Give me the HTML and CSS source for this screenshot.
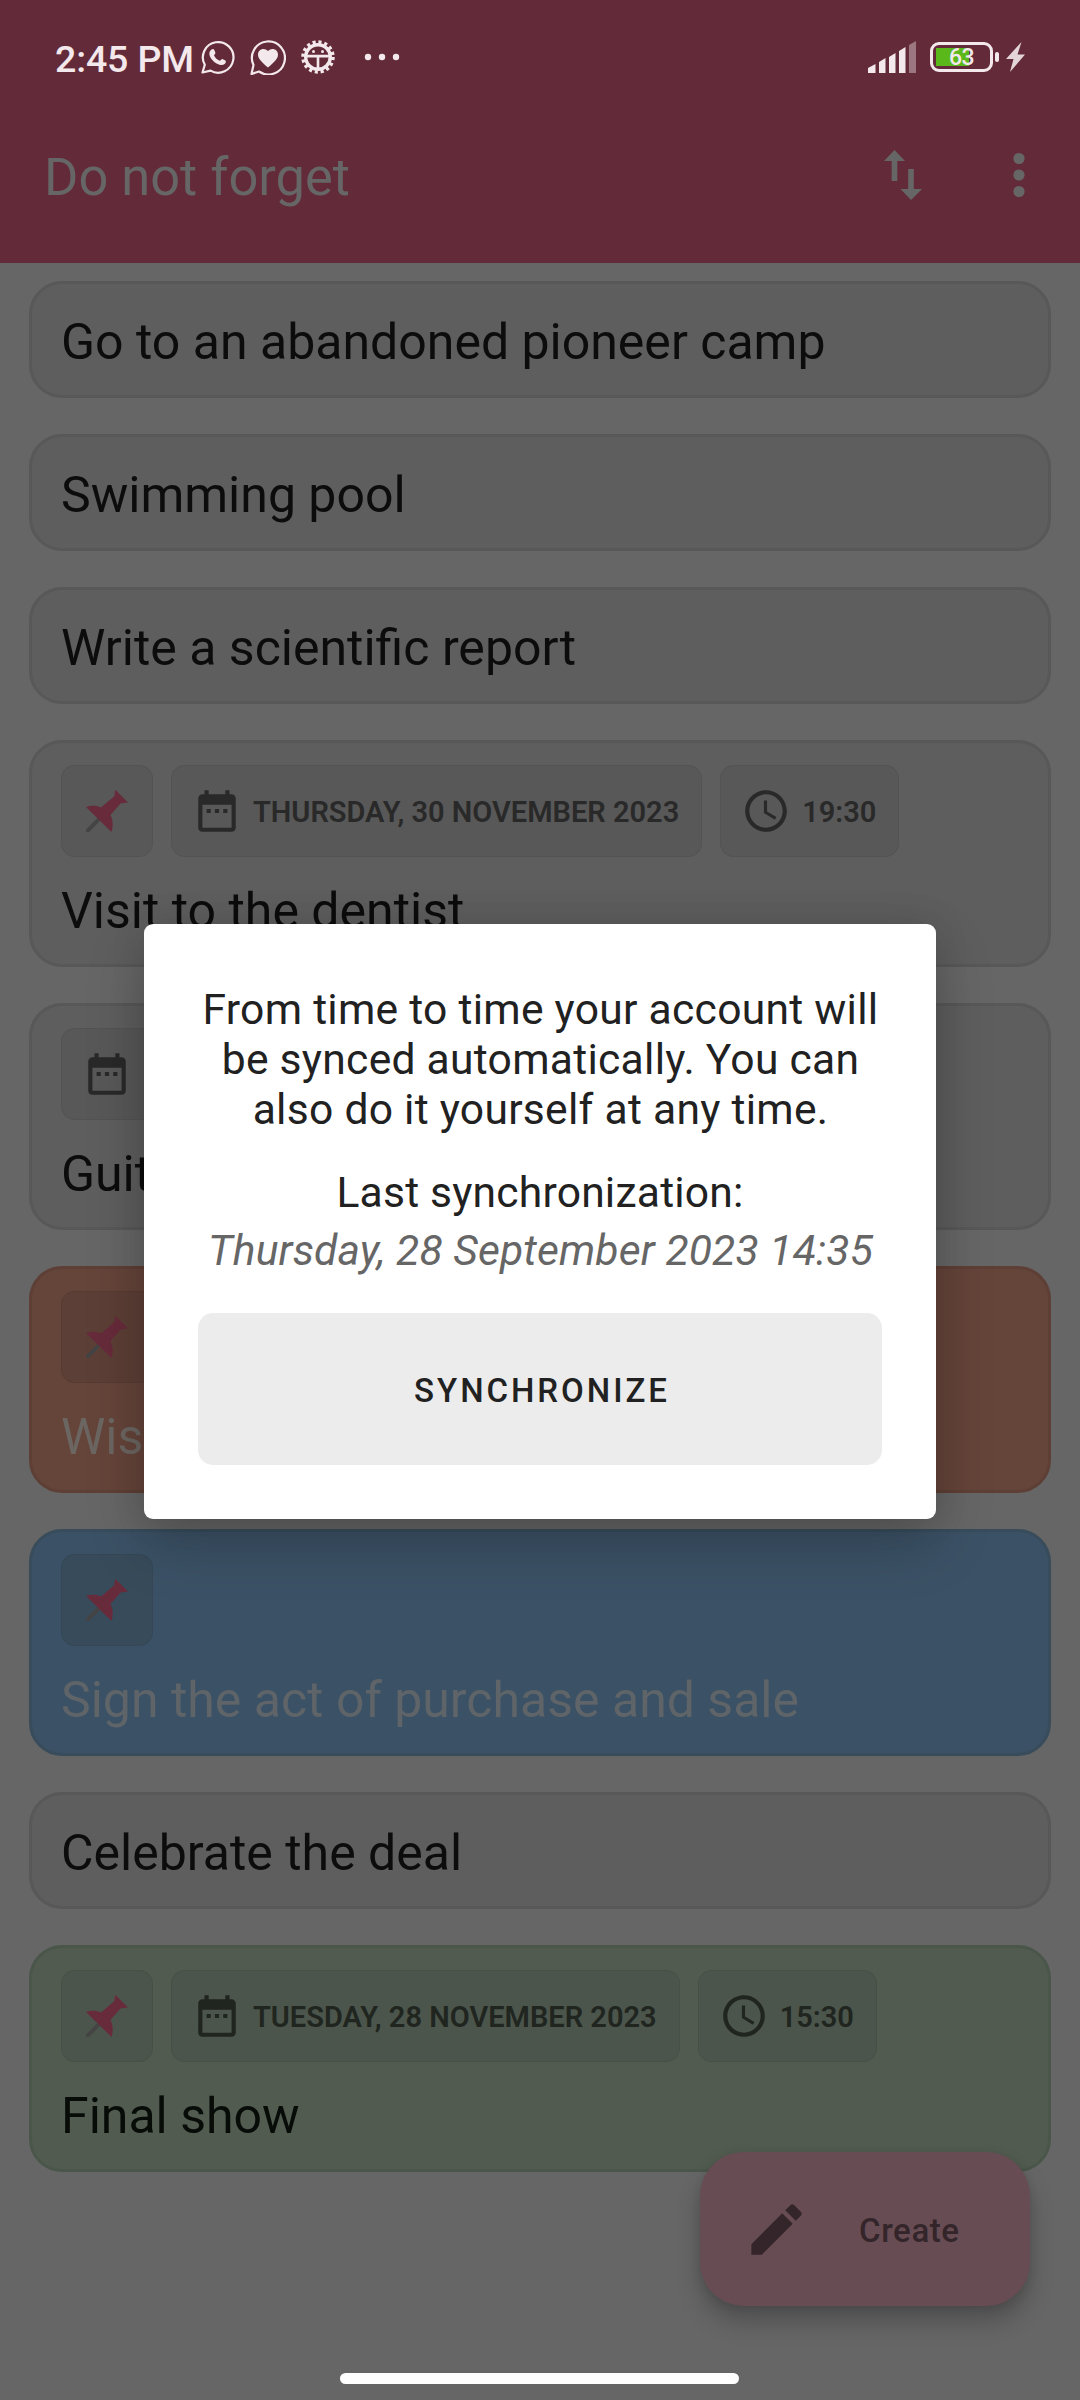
FILE: index.html
```html
<!DOCTYPE html>
<html lang="en">
<head>
<meta charset="utf-8">
<title>Do not forget</title>
<link rel="stylesheet" href="styles.css">
</head>
<body>
<svg class="defs" aria-hidden="true">
  <symbol id="pin" viewBox="0 0 42 42">
    <path class="pin-needle" d="M13 26.500 0 39.500V42H3L16 29z"/>
    <path class="pin-head" d="M29.500 0 42 12.500C39 13 37 13 34.500 13.500L24.500 25C27 30 27.500 36 25.500 42L0 17C5 15 11 15.500 15 17.500L28.500 6C28.500 4 28.500 2 29.500 0z"/>
  </symbol>
  <symbol id="calendar" viewBox="0 0 24 24">
    <path d="M9 11H7v2h2v-2zm4 0h-2v2h2v-2zm4 0h-2v2h2v-2zm2-7h-1V2h-2v2H8V2H6v2H5c-1.110 0-1.990.9-1.990 2L3 20c0 1.100.890 2 2 2h14c1.100 0 2-.9 2-2V6c0-1.100-.9-2-2-2zm0 16H5V9h14v11z"/>
  </symbol>
  <symbol id="clock" viewBox="0 0 24 24">
    <path d="M11.990 2C6.470 2 2 6.480 2 12s4.470 10 9.990 10C17.520 22 22 17.520 22 12S17.520 2 11.990 2zM12 20c-4.420 0-8-3.580-8-8s3.580-8 8-8 8 3.580 8 8-3.580 8-8 8zm.5-13H11v6l5.250 3.150.75-1.230-4.500-2.670z"/>
  </symbol>
</svg>

<header class="header">
  <div class="status">
    <span class="time">2:45 PM</span>
    <svg class="whatsapp" viewBox="0 0 34 34"><path class="line" d="M1.500 32.500 3.800 24.800A15.300 15.300 0 1 1 9.500 30.600z"/><path d="M10.500 9.500c1.500-1 2.500-.5 3 1l.9 2.300c.3.900-1.500 2.200-1.300 2.800 1.200 2.600 3 4.200 5.600 5.200.7.200 1.800-2.100 2.700-1.800l3 1.500c1 .5.300 2.800-.8 3.600-2 1.500-4.500 1.200-7.600-.4-3.400-1.800-6-4.600-7.200-7.700-1-2.600-.3-5.200 1.700-6.500z"/></svg>
    <svg class="heart" viewBox="0 0 36 36"><path class="line" d="M1.500 35 3.500 26A16.500 16.500 0 1 1 9 32.500z"/><path d="M18 28.500C11 22.500 8 19.500 8 15.500c0-5.500 6.500-7.500 10-3.500 3.500-4 10-2 10 3.500 0 4-3 7-10 13z"/></svg>
    <svg class="bug" viewBox="0 0 34 34"><circle class="teeth" cx="17" cy="17" r="15"/><circle class="ring" cx="17" cy="17" r="12.300"/><path d="M4.500 14.800h25v2.700H18.300v12h-2.600v-12H4.500z"/><circle cx="12.500" cy="11.500" r="1.500"/><circle cx="21.500" cy="11.500" r="1.500"/></svg>
    <svg class="more" viewBox="0 0 36 8"><circle cx="4" cy="4" r="3.200"/><circle cx="18" cy="4" r="3.200"/><circle cx="32" cy="4" r="3.200"/></svg>
    <svg class="signal" viewBox="0 0 48 32"><path d="M0 27 7.500 23V32H0zM11 21 17.500 17V32H11zM21 16 27.500 12V32H21zM31 10 37.500 6V32H31z"/><path opacity=".4" d="M41 4 48 0V32H41z"/></svg>
    <span class="battery">63</span><span class="nub"></span>
    <svg class="bolt" viewBox="0 0 19 30"><path d="M15.500 0 0 17h7.500L4 30 19 12.500h-7.500z"/></svg>
  </div>
  <div class="toolbar">
    <h1 class="app-title">Do not forget</h1>
    <svg class="sort" viewBox="0 0 38 50"><path d="M10.500 0 21 11h-7.700v20H7.700V11H0zM24.200 19h5.600v20H38L27 50 16.500 39h7.700z"/></svg>
    <svg class="menu" viewBox="0 0 12 46"><circle cx="6" cy="6.500" r="5.600"/><circle cx="6" cy="23" r="5.600"/><circle cx="6" cy="39.500" r="5.600"/></svg>
  </div>
</header>

<main class="list">
  <article class="card"><p class="title">Go to an abandoned pioneer camp</p></article>
  <article class="card"><p class="title">Swimming pool</p></article>
  <article class="card"><p class="title">Write a scientific report</p></article>
  <article class="card tall">
    <div class="chips">
      <span class="chip"><svg class="pin"><use href="#pin"/></svg></span>
      <span class="chip"><svg class="icon"><use href="#calendar"/></svg><span class="label">THURSDAY, 30 NOVEMBER 2023</span></span>
      <span class="chip"><svg class="icon"><use href="#clock"/></svg><span class="label">19:30</span></span>
    </div>
    <p class="title">Visit to the dentist</p>
  </article>
  <article class="card tall">
    <div class="chips"><span class="chip wide"><svg class="icon"><use href="#calendar"/></svg></span></div>
    <p class="title">Guit</p>
  </article>
  <article class="card tall orange">
    <div class="chips"><span class="chip"><svg class="pin"><use href="#pin"/></svg></span></div>
    <p class="title">Wis</p>
  </article>
  <article class="card tall blue">
    <div class="chips"><span class="chip"><svg class="pin"><use href="#pin"/></svg></span></div>
    <p class="title">Sign the act of purchase and sale</p>
  </article>
  <article class="card"><p class="title">Celebrate the deal</p></article>
  <article class="card tall green">
    <div class="chips">
      <span class="chip"><svg class="pin"><use href="#pin"/></svg></span>
      <span class="chip"><svg class="icon"><use href="#calendar"/></svg><span class="label">TUESDAY, 28 NOVEMBER 2023</span></span>
      <span class="chip"><svg class="icon"><use href="#clock"/></svg><span class="label">15:30</span></span>
    </div>
    <p class="title">Final show</p>
  </article>
</main>

<button class="fab">
  <svg class="pencil" viewBox="0 0 24 24"><path d="M3 17.250V21h3.750L17.810 9.940l-3.750-3.750L3 17.250zM20.710 7.040c.39-.39.39-1.020 0-1.410l-2.340-2.340c-.39-.39-1.020-.39-1.410 0l-1.830 1.830 3.750 3.750 1.830-1.830z"/></svg>
  <span class="fab-label">Create</span>
</button>

<section class="dialog" role="dialog">
  <p class="message">From time to time your account will<br>be synced automatically. You can<br>also do it yourself at any time.</p>
  <p class="caption">Last synchronization:</p>
  <p class="date">Thursday, 28 September 2023 14:35</p>
  <button class="sync">SYNCHRONIZE</button>
</section>
<div class="home-bar"></div>
</body>
</html>
```
FILE: styles.css
```css
* { box-sizing: border-box; }
body {
  margin: 0;
  position: relative;
  width: 1080px;
  height: 2400px;
  overflow: hidden;
  background: #666;
  color: #0c0c0c;
  font-family: Roboto, "Liberation Sans", sans-serif;
}
p, h1 { margin: 0; font-weight: 400; white-space: nowrap; }
svg { display: block; flex: none; fill: currentColor; }
button { border: 0; font: inherit; color: inherit; }
.defs { position: absolute; width: 0; height: 0; }

.header { height: 263px; background: #632b39; }
.status {
  display: flex;
  align-items: center;
  height: 114px;
  padding-left: 55px;
  color: #f3e8eb;
}
.time { width: 146px; font-size: 37.5px; font-weight: 500; letter-spacing: -.15px; line-height: 44px; margin-top: 4px; white-space: nowrap; }
.line { fill: none; stroke: currentColor; stroke-width: 2.2; stroke-linejoin: round; }
.whatsapp { width: 34px; height: 34px; }
.heart { width: 36px; height: 36px; margin-left: 15px; }
.bug { width: 34px; height: 34px; margin-left: 15px; }
.teeth { fill: none; stroke: currentColor; stroke-width: 3.5; stroke-dasharray: 3.1 2.790; }
.ring { fill: none; stroke: currentColor; stroke-width: 3.4; }
.more { width: 36px; height: 8px; margin-left: 29px; margin-top: 0; }
.signal { width: 48px; height: 32px; margin-left: 468px; }
.battery {
  width: 63px;
  height: 30px;
  margin-left: 14px;
  border: 3px solid currentColor;
  border-radius: 9px;
  background: linear-gradient(#5ab81b, #5ab81b) 3px 3px / 33px 18px no-repeat;
  font-size: 23px;
  line-height: 26px;
  font-weight: 500;
  letter-spacing: -.5px;
  text-align: center;
}
.nub { width: 4px; height: 10px; margin-left: 2px; border-radius: 2px; background: currentColor; }
.bolt { width: 19px; height: 30px; margin-left: 7px; opacity: .9; }
.toolbar { display: flex; align-items: center; height: 122px; padding-left: 44px; color: #666; }
.app-title { width: 840px; font-size: 52.4px; line-height: 60px; margin-top: 3px; }
.sort { width: 38px; height: 50px; }
.menu { width: 12px; height: 46px; margin-left: 91px; }

.list { display: flex; flex-direction: column; gap: 36px; padding: 18px 29px 0; }
.card {
  --chip: #585858;
  --ink: #292929;
  height: 117px;
  padding: 29px 29px 0;
  border: 3px solid #585858;
  border-radius: 33px;
  background: #5e5e5e;
}
.card.tall { height: 227px; padding-top: 22px; }
.title { font-size: 50px; line-height: 58px; }
.orange { --chip: #5c3f36; background: #65443a; border-color: #5e3f36; color: #6b6661; }
.blue { --chip: #384b5a; background: #3b5165; border-color: #384c5b; color: #5e6468; }
.green { --chip: #4b554b; --ink: #20251f; background: #515b4f; border-color: #4b564b; color: #080c08; }
.chips { display: flex; gap: 18px; height: 92px; margin-bottom: 25px; }
.chip {
  display: flex;
  align-items: center;
  min-width: 92px;
  padding: 0 21px;
  border-radius: 14px;
  background: var(--chip);
  box-shadow: inset 0 0 0 1px rgba(0, 0, 0, .05);
  color: var(--ink);
}
.chip.wide { width: 520px; }
.icon { width: 50px; height: 50px; }
.pin { width: 42px; height: 42px; margin: 0 4px; }
.pin-needle { fill: #444; }
.pin-head { fill: #672b3b; }
.label { margin: 2px 2px 0 11px; font-size: 29px; font-weight: 600; line-height: 34px; white-space: nowrap; }

.fab {
  position: absolute;
  left: 700px;
  top: 2152px;
  display: flex;
  align-items: center;
  width: 330px;
  height: 154px;
  padding: 0 0 0 43px;
  border-radius: 44px;
  background: #674d53;
  box-shadow: 0 16px 24px rgba(0, 0, 0, .22), 0 3px 10px rgba(0, 0, 0, .1);
  color: #33252a;
  font-size: 33px;
  font-weight: 500;
}
.pencil { width: 67px; height: 67px; margin-right: 49px; }
.fab-label { margin-top: 3px; letter-spacing: .6px; }

.dialog {
  position: absolute;
  left: 144px;
  top: 924px;
  width: 792px;
  height: 595px;
  padding: 60px 54px 54px;
  border-radius: 9px;
  background: #fff;
  box-shadow: 0 24px 60px rgba(0, 0, 0, .2), 0 0 36px rgba(0, 0, 0, .1);
  color: #212121;
  font-size: 42.600px;
  line-height: 50px;
  text-align: center;
}
.message { padding-left: 1px; letter-spacing: .27px; }
.caption { margin-top: 33px; letter-spacing: .2px; }
.date { margin-top: 8px; padding-left: 1px; color: #666; font-style: italic; letter-spacing: .12px; }
.sync {
  display: block;
  width: 684px;
  height: 152px;
  margin-top: 38px;
  padding: 4px 0 0 4px;
  border-radius: 15px;
  background: #ececec;
  font-size: 33px;
  font-weight: 500;
  letter-spacing: 2.950px;
}
.home-bar {
  position: absolute;
  left: 340px;
  top: 2373px;
  width: 399px;
  height: 11px;
  border-radius: 6px;
  background: #fff;
}
```
